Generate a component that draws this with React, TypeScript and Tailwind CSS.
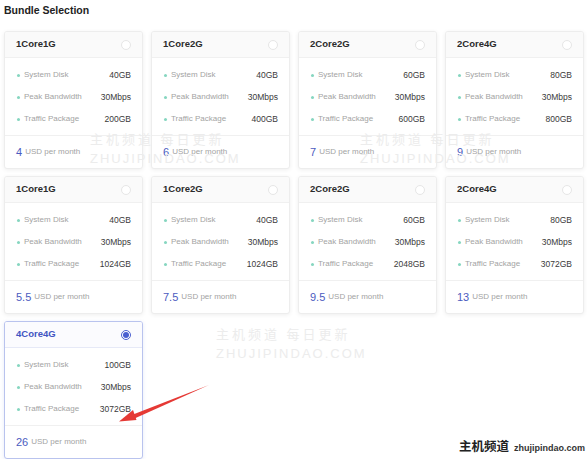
import React from 'react';

type Bundle = {
  name: string;
  disk: string;
  bandwidth: string;
  traffic: string;
  price: string;
  selected?: boolean;
};

const bundles: Bundle[] = [
  { name: '1Core1G', disk: '40GB', bandwidth: '30Mbps', traffic: '200GB', price: '4' },
  { name: '1Core2G', disk: '40GB', bandwidth: '30Mbps', traffic: '400GB', price: '6' },
  { name: '2Core2G', disk: '60GB', bandwidth: '30Mbps', traffic: '600GB', price: '7' },
  { name: '2Core4G', disk: '80GB', bandwidth: '30Mbps', traffic: '800GB', price: '9' },
  { name: '1Core1G', disk: '40GB', bandwidth: '30Mbps', traffic: '1024GB', price: '5.5' },
  { name: '1Core2G', disk: '40GB', bandwidth: '30Mbps', traffic: '1024GB', price: '7.5' },
  { name: '2Core2G', disk: '60GB', bandwidth: '30Mbps', traffic: '2048GB', price: '9.5' },
  { name: '2Core4G', disk: '80GB', bandwidth: '30Mbps', traffic: '3072GB', price: '13' },
  { name: '4Core4G', disk: '100GB', bandwidth: '30Mbps', traffic: '3072GB', price: '26', selected: true },
];

function Row({ label, value }: { label: string; value: string }) {
  return (
    <div className="flex h-[22px] items-center justify-between">
      <div className="flex items-center">
        <span className="ml-[1px] mr-[4px] h-[3px] w-[3px] rounded-full bg-[#86d6c0]" />
        <span className="text-[8px] text-[#a3a3a3]">{label}</span>
      </div>
      <span className="text-[8.5px] text-[#3a3a3a]">{value}</span>
    </div>
  );
}

function BundleCard({ b }: { b: Bundle }) {
  return (
    <div
      className={
        b.selected
          ? 'flex h-[138px] flex-col overflow-hidden rounded-[3px] border border-[#b9c3ee] bg-white shadow-[0_1px_4px_rgba(60,80,200,0.12)]'
          : 'flex h-[138px] flex-col overflow-hidden rounded-[3px] border border-[#ededed] bg-white shadow-[0_1px_4px_rgba(0,0,0,0.07)]'
      }
    >
      <div
        className={
          b.selected
            ? 'flex h-[26px] shrink-0 items-center justify-between border-b border-[#e6e9f7] bg-[#fbfbfe] px-[11px]'
            : 'flex h-[26px] shrink-0 items-center justify-between border-b border-[#f0f0f0] bg-[#fafafa] px-[11px]'
        }
      >
        <span
          className={
            b.selected
              ? 'text-[9.5px] font-bold text-[#4255c2]'
              : 'text-[9.5px] font-bold text-[#2b2b2b]'
          }
        >
          {b.name}
        </span>
        {b.selected ? (
          <span className="flex h-[10px] w-[10px] items-center justify-center rounded-full border border-[#4a5fd0] bg-white">
            <span className="h-[6px] w-[6px] rounded-full bg-[#4a5fd0]" />
          </span>
        ) : (
          <span className="h-[10px] w-[10px] rounded-full border border-[#e6e6e6] bg-white" />
        )}
      </div>
      <div className="px-[11px] pt-[6px] pb-[5px]">
        <Row label="System Disk" value={b.disk} />
        <Row label="Peak Bandwidth" value={b.bandwidth} />
        <Row label="Traffic Package" value={b.traffic} />
      </div>
      <div className="flex flex-1 items-center border-t border-[#f0f0f0] px-[11px]">
        <span className="mr-[3px] text-[11px] font-medium text-[#4b5bc0]">{b.price}</span>
        <span className="text-[8px] text-[#a3a3a3]">USD per month</span>
      </div>
    </div>
  );
}

// faint site watermark lying over the cards
function Watermark({ className }: { className: string }) {
  return (
    <div className={'pointer-events-none absolute flex flex-col items-start leading-none text-[#ececec] ' + className}>
      <span className="text-[13px] tracking-[3px]">主机频道 每日更新</span>
      <span className="mt-[6px] text-[13px] tracking-[2px]">ZHUJIPINDAO.COM</span>
    </div>
  );
}

export default function App() {
  return (
    <div
      className="relative h-[459px] w-[588px] overflow-hidden bg-white px-[4px]"
      style={{ fontFamily: '"Liberation Sans", Arial, "Noto Sans CJK SC", sans-serif' }}
    >
      <div className="flex h-[31px] items-start pt-[3px]">
        <h1 className="text-[10.5px] font-bold text-[#222]">Bundle Selection</h1>
      </div>
      <div className="grid grid-cols-4 gap-x-[8px] gap-y-[7px]">
        {bundles.map((b, i) => (
          <BundleCard key={i} b={b} />
        ))}
      </div>

      <Watermark className="left-[90px] top-[133px]" />
      <Watermark className="left-[360px] top-[133px]" />
      <Watermark className="left-[216px] top-[328px]" />

      <svg className="pointer-events-none absolute left-0 top-0" width="588" height="459">
        <path d="M209 385 L133 414.5 L134.5 418.5 Z" fill="#e53935" />
        <path d="M119 421.5 L133 410 L136.5 420 Z" fill="#e53935" />
      </svg>

      <div className="absolute bottom-[3px] right-[3px] flex items-baseline gap-[5px]">
        <span className="text-[12.5px] font-bold text-[#222]" style={{ fontFamily: '"Noto Sans CJK SC", sans-serif' }}>
          主机频道
        </span>
        <span className="text-[9px] font-bold text-[#333]">zhujipindao.com</span>
      </div>
    </div>
  );
}
